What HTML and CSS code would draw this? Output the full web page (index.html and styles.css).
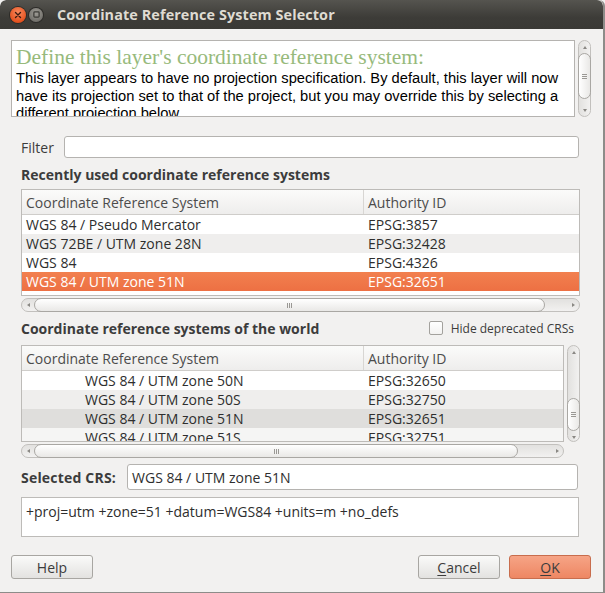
FILE: index.html
```html
<!DOCTYPE html>
<html>
<head>
<meta charset="utf-8">
<link rel="stylesheet" href="styles.css">
</head>
<body>
<div class="window">
  <div class="titlebar">
    <div class="tb-btn tb-close">
      <svg width="8" height="8" viewBox="0 0 8 8"><path d="M1.5 1.5 L6.5 6.5 M6.5 1.5 L1.5 6.5" stroke="#3a1a10" stroke-width="1.4" stroke-linecap="round"/></svg>
    </div>
    <div class="tb-btn tb-min">
      <svg width="7" height="7" viewBox="0 0 8 8"><rect x="1" y="1" width="6" height="6" rx="1" fill="none" stroke="#3c3b37" stroke-width="1.4"/></svg>
    </div>
    <div class="title">Coordinate Reference System Selector</div>
  </div>

  <div class="content">
    <div class="info-row">
      <div class="info">
        <div class="info-h">Define this layer's coordinate reference system:</div>
        <div class="info-p">This layer appears to have no projection specification. By default, this layer will now have its projection set to that of the project, but you may override this by selecting a different projection below.</div>
      </div>
      <div class="vscroll vs-info">
        <span class="arr-up"></span>
        <span class="vthumb vthumb-info"><span class="hgrip"></span></span>
        <span class="vspace"></span>
        <span class="arr-down"></span>
      </div>
    </div>

    <div class="group">
      <div class="filter-row">
        <span class="label">Filter</span>
        <div class="input filter-input"></div>
      </div>

      <div class="section-title">Recently used coordinate reference systems</div>

      <div class="table t1">
        <div class="thead">
          <div class="c1">Coordinate Reference System</div>
          <div class="c2">Authority ID</div>
        </div>
        <div class="row"><div class="c1">WGS 84 / Pseudo Mercator</div><div class="c2">EPSG:3857</div></div>
        <div class="row alt"><div class="c1">WGS 72BE / UTM zone 28N</div><div class="c2">EPSG:32428</div></div>
        <div class="row"><div class="c1">WGS 84</div><div class="c2">EPSG:4326</div></div>
        <div class="row sel"><div class="c1">WGS 84 / UTM zone 51N</div><div class="c2">EPSG:32651</div></div>
      </div>

      <div class="hscroll hs1">
        <span class="arr-left"></span>
        <span class="hthumb"><span class="vgrip"></span></span>
        <span class="hspace hs1-space"></span>
        <span class="arr-right"></span>
      </div>

      <div class="world-head">
        <span class="section-title-inline">Coordinate reference systems of the world</span>
        <span class="check-wrap"><span class="checkbox"></span><span class="check-label">Hide deprecated CRSs</span></span>
      </div>

      <div class="world-row">
        <div class="world-left">
          <div class="table t2">
            <div class="thead">
              <div class="c1">Coordinate Reference System</div>
              <div class="c2">Authority ID</div>
            </div>
            <div class="row"><div class="c1 ind">WGS 84 / UTM zone 50N</div><div class="c2">EPSG:32650</div></div>
            <div class="row alt"><div class="c1 ind">WGS 84 / UTM zone 50S</div><div class="c2">EPSG:32750</div></div>
            <div class="row sel-inactive"><div class="c1 ind">WGS 84 / UTM zone 51N</div><div class="c2">EPSG:32651</div></div>
            <div class="row alt2"><div class="c1 ind">WGS 84 / UTM zone 51S</div><div class="c2">EPSG:32751</div></div>
          </div>
          <div class="hscroll hs2">
            <span class="arr-left"></span>
            <span class="hthumb"><span class="vgrip"></span></span>
            <span class="hspace hs2-space"></span>
            <span class="arr-right"></span>
          </div>
        </div>
        <div class="vscroll vs-world">
          <span class="arr-up"></span>
          <span class="vspace vs-world-top"></span>
          <span class="vthumb vthumb-world"><span class="hgrip"></span></span>
          <span class="arr-down"></span>
        </div>
      </div>

      <div class="selected-row">
        <span class="label bold">Selected CRS:</span>
        <div class="input sel-input">WGS 84 / UTM zone 51N</div>
      </div>

      <div class="proj">+proj=utm +zone=51 +datum=WGS84 +units=m +no_defs</div>
    </div>

    <div class="buttons">
      <div class="btn">Help</div>
      <div class="btn-spacer"></div>
      <div class="btn"><u>C</u>ancel</div>
      <div class="btn btn-ok"><u>O</u>K</div>
    </div>
  </div>
</div>
</body>
</html>
```

FILE: styles.css
```css
* { box-sizing: border-box; }
html, body { margin: 0; padding: 0; background: #f2f1f0; }
body {
  font-family: "Open Sans", "Noto Sans", sans-serif;
  font-size: 14px;
  color: #3c3c3c;
  width: 605px;
  height: 593px;
  overflow: hidden;
}
.window {
  width: 605px;
  height: 593px;
  background: #f2f1f0;
  border-right: 2px solid #8d8c89;
  border-bottom: 1px solid #8d8c89;
  display: flex;
  flex-direction: column;
  border-radius: 6px 6px 0 0;
  overflow: hidden;
}
.titlebar {
  height: 29px;
  flex: none;
  background: linear-gradient(#55544f, #3d3c38 60%, #3a3935);
  display: flex;
  align-items: center;
  padding-left: 10px;
  border-radius: 6px 6px 0 0;
}
.tb-btn {
  border-radius: 50%;
  display: flex; align-items: center; justify-content: center;
}
.tb-close {
  width: 16px; height: 16px;
  background: radial-gradient(circle at 50% 35%, #f98a5f, #e4521f 70%, #c8441a);
  box-shadow: 0 0 0 1px #2c2b28;
  margin-right: 3px;
}
.tb-min {
  width: 14px; height: 14px;
  background: radial-gradient(circle at 50% 35%, #9d9b95, #74726d 70%, #64625d);
  box-shadow: 0 0 0 1px #2c2b28;
}
.title {
  margin-left: 14px;
  font-weight: 700;
  font-size: 14.4px;
  color: #dfdbd2;
  letter-spacing: 0.1px;
}
.content {
  flex: 1;
  padding: 11px 12px 0 11px;
  display: flex;
  flex-direction: column;
}
.info-row {
  display: flex;
  height: 77px;
  gap: 3px;
}
.info {
  flex: 1;
  background: #fff;
  border: 1px solid #b5b3b0;
  padding: 0 4px;
  overflow: hidden;
}
.info-h {
  font-family: "Liberation Serif", serif;
  font-size: 21.5px;
  color: #97ba7c;
  line-height: 24px;
  margin-top: 4px;
}
.info-p {
  font-family: "Liberation Sans", Arial, sans-serif;
  font-size: 14.7px;
  color: #000;
  line-height: 17.5px;
  margin-top: 1px;
}

/* scrollbars */
.vscroll {
  width: 13px;
  border: 1px solid #c2c0bd;
  border-radius: 7px;
  background: linear-gradient(90deg, #e2e1df, #f2f1f0);
  display: flex;
  flex-direction: column;
  align-items: center;
}
.vs-info { height: 77px; }
.arr-up, .arr-down, .arr-left, .arr-right {
  flex: none;
  display: flex; align-items: center; justify-content: center;
}
.arr-up, .arr-down { height: 12px; width: 100%; }
.arr-left, .arr-right { width: 12px; height: 100%; }
.arr-up::after {
  content: ""; border-left: 2.5px solid transparent; border-right: 2.5px solid transparent;
  border-bottom: 3px solid #8a8884;
}
.arr-down::after {
  content: ""; border-left: 2.5px solid transparent; border-right: 2.5px solid transparent;
  border-top: 3px solid #8a8884;
}
.arr-left::after {
  content: ""; border-top: 2.5px solid transparent; border-bottom: 2.5px solid transparent;
  border-right: 3px solid #8a8884;
}
.arr-right::after {
  content: ""; border-top: 2.5px solid transparent; border-bottom: 2.5px solid transparent;
  border-left: 3px solid #8a8884;
}
.vthumb {
  width: 13px;
  margin: 0 -1px;
  border: 1px solid #a9a7a3;
  border-radius: 7px;
  background: linear-gradient(90deg, #ffffff, #e9e8e6);
  display: flex; align-items: center; justify-content: center;
  flex: none;
}
.vthumb-info { height: 46px; }
.vspace { flex: 1; }
.hgrip {
  width: 5px; height: 5px;
  background: repeating-linear-gradient(#9a9894 0 1px, transparent 1px 2px);
}
.vgrip {
  width: 5px; height: 5px;
  background: repeating-linear-gradient(90deg, #9a9894 0 1px, transparent 1px 2px);
}
.hscroll {
  height: 14px;
  border: 1px solid #c2c0bd;
  border-radius: 7px;
  background: linear-gradient(#e2e1df, #f2f1f0);
  display: flex;
  align-items: center;
}
.hthumb {
  height: 14px;
  margin: -1px 0;
  flex: 1;
  border: 1px solid #a9a7a3;
  border-radius: 7px;
  background: linear-gradient(#ffffff, #e9e8e6);
  display: flex; align-items: center; justify-content: center;
}
.hspace { flex: none; }
.hs1-space { width: 22px; }
.hs2-space { width: 33px; }

.group {
  padding: 0 11px 0 10px;
  display: flex;
  flex-direction: column;
}
.filter-row {
  margin-top: 19px;
  display: flex;
  align-items: center;
  height: 22px;
}
.label { margin-right: 10px; }
.bold { font-weight: 700; }
.input {
  flex: 1;
  height: 22px;
  background: #fff;
  border: 1px solid #b5b3b0;
  border-radius: 3px;
}
.filter-input { margin-right: 1px; }
.section-title {
  margin-top: 8px;
  font-weight: 700;
  line-height: 18px;
}
.table {
  background: #fff;
  border: 1px solid #bdbbb8;
  overflow: hidden;
}
.t1 { margin-top: 5px; height: 107px; }
.thead {
  display: flex;
  height: 25px;
  background: linear-gradient(#fbfbfa, #eeedec);
  border-bottom: 1px solid #cfcdca;
  align-items: center;
  color: #4c4c4c;
}
.thead .c1 { border-right: 1px solid #d8d6d3; height: 100%; display: flex; align-items: center; }
.c1 { width: 342px; padding-left: 4px; flex: none; }
.c2 { flex: 1; padding-left: 4px; }
.row {
  display: flex;
  height: 19px;
  align-items: center;
  color: #2e2e2e;
  white-space: nowrap;
  overflow: hidden;
}
.row .c1, .row .c2 { line-height: 19px; }
.alt { background: #efeeed; }
.alt2 { background: #f5f5f4; }
.sel { background: linear-gradient(#f2804f, #ed7043); color: #fff; }
.sel-inactive { background: #dfdedc; }
.ind { padding-left: 63px; }

.hs1 { margin-top: 2px; }

.world-head {
  margin-top: 7px;
  height: 18px;
  display: flex;
  align-items: center;
  justify-content: space-between;
}
.section-title-inline { font-weight: 700; }
.check-wrap { display: flex; align-items: center; margin-right: 6px; font-size: 12px; }
.checkbox {
  width: 14px; height: 14px;
  border: 1px solid #a3a19d;
  border-radius: 2px;
  background: linear-gradient(#ffffff, #f3f2f1);
  margin-right: 8px;
}
.world-row {
  margin-top: 8px;
  display: flex;
  gap: 3px;
}
.world-left { flex: 1; display: flex; flex-direction: column; }
.t2 { height: 97px; }
.hs2 { margin-top: 2px; }
.vs-world { height: 97px; }
.vs-world-top { height: 40px; flex: none; }
.vthumb-world { height: 33px; }

.selected-row {
  margin-top: 6px;
  height: 26px;
  display: flex;
  align-items: center;
}
.selected-row .label { margin-right: 11px; letter-spacing: 0.2px; }
.sel-input {
  height: 26px;
  padding-left: 4px;
  display: flex;
  align-items: center;
  color: #2e2e2e;
  margin-right: 2px;
}
.proj {
  margin-top: 7px;
  height: 40px;
  background: #fff;
  border: 1px solid #bdbbb8;
  padding: 4px 4px;
  color: #2e2e2e;
  margin-right: 1px;
}
.buttons {
  margin-top: 18px;
  display: flex;
  align-items: center;
  gap: 9px;
}
.btn-spacer { flex: 1; }
.btn {
  width: 82px;
  height: 24px;
  border: 1px solid #a8a6a2;
  border-radius: 3px;
  background: linear-gradient(#fafaf9, #e3e2e0);
  display: flex;
  align-items: center;
  justify-content: center;
  color: #3c3c3c;
  font-size: 14px;
}
.btn u { text-decoration-thickness: 1px; text-underline-offset: 2px; }
.btn-ok {
  background: linear-gradient(#f6a486, #ee8763);
  border-color: #c86d4d;
  color: #3c3c3c;
}
```
